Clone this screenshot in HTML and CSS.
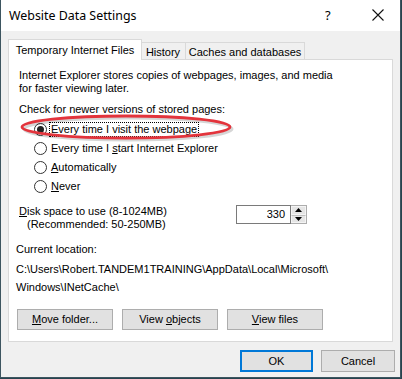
FILE: index.html
```html
<!DOCTYPE html>
<html>
<head>
<meta charset="utf-8">
<link rel="stylesheet" href="styles.css">
</head>
<body>
<div class="window">
  <div class="titlebar">
    <span class="title">Website Data Settings</span>
    <span class="help">?</span>
    <span class="close">
      <svg width="12" height="12" viewBox="0 0 12 12"><path d="M0.5 0.5 L11.5 11.5 M11.5 0.5 L0.5 11.5" stroke="#111" stroke-width="1.1" fill="none"/></svg>
    </span>
  </div>
  <div class="body">
    <div class="tabs">
      <div class="tab active">Temporary Internet Files</div>
      <div class="tab history">History</div>
      <div class="tab caches">Caches and databases</div>
    </div>
    <div class="panel">
      <p class="desc">Internet Explorer stores copies of webpages, images, and media<br>for faster viewing later.</p>
      <p class="check">Check for newer versions of stored pages:</p>
      <div class="radios">
        <div class="radio"><span class="rb on"></span><span class="lbl focus"><u>E</u>very time I visit the webpage</span></div>
        <div class="radio"><span class="rb"></span><span class="lbl">Every time I <u>s</u>tart Internet Explorer</span></div>
        <div class="radio"><span class="rb"></span><span class="lbl"><u>A</u>utomatically</span></div>
        <div class="radio"><span class="rb"></span><span class="lbl"><u>N</u>ever</span></div>
      </div>
      <div class="disk">
        <div class="disk-label"><u>D</u>isk space to use (8-1024MB)<br><span class="rec">(Recommended: 50-250MB)</span></div>
        <div class="spin">
          <div class="spin-field">330</div>
          <div class="spin-btns">
            <div class="spin-btn"><svg width="7" height="4" viewBox="0 0 7 4"><path d="M0 4 L3.5 0 L7 4 Z" fill="#000"/></svg></div>
            <div class="spin-btn"><svg width="7" height="4" viewBox="0 0 7 4"><path d="M0 0 L3.5 4 L7 0 Z" fill="#000"/></svg></div>
          </div>
        </div>
      </div>
      <div class="loc-label">Current location:</div>
      <div class="path p1">C:\Users\Robert.TANDEM1TRAINING\AppData\Local\Microsoft\</div>
      <div class="path p2">Windows\INetCache\</div>
      <div class="btnrow">
        <div class="btn"><span><u>M</u>ove folder...</span></div>
        <div class="btn"><span>View <u>o</u>bjects</span></div>
        <div class="btn"><span><u>V</u>iew files</span></div>
      </div>
    </div>
    <div class="footer">
      <div class="btn dlg ok"><span>OK</span></div>
      <div class="btn dlg"><span>Cancel</span></div>
    </div>
  </div>
  <svg class="mark" width="240" height="36" viewBox="0 0 240 36">
    <ellipse cx="110" cy="18" rx="104" ry="11" fill="none" stroke="rgba(0,0,0,0.16)" stroke-width="3"/>
    <ellipse cx="108" cy="16" rx="104" ry="11" fill="none" stroke="#e3343c" stroke-width="2.8"/>
  </svg>
</div>
</body>
</html>
```

FILE: styles.css
```css
* { box-sizing: border-box; }
html, body { margin: 0; padding: 0; }
body {
  background: #27444e;
  width: 402px;
  height: 379px;
  overflow: hidden;
  font-family: "Liberation Sans", Arial, sans-serif;
  font-size: 11px;
  color: #000;
}
p { margin: 0; }
u { text-decoration: underline; text-underline-offset: 1px; }

.window {
  position: relative;
  width: 401px;
  height: 378px;
  border-left: 1px solid #3d5560;
  border-right: 1px solid #3d5560;
  border-bottom: 1px solid #3d5560;
  background: #f0f0f0;
  display: flex;
  flex-direction: column;
}

.titlebar {
  height: 31px;
  background: #fff;
  display: flex;
  align-items: center;
  padding-left: 8px;
  font-family: "Noto Sans", "Open Sans", sans-serif;
  font-size: 12.4px;
  color: #000;
}
.title { flex: 1; padding-bottom: 1px; }
.help { width: 12px; margin-right: 35px; font-size: 13px; padding-bottom: 1px; }
.close { width: 12px; height: 12px; margin-right: 16px; display: flex; margin-bottom: 1px; }

.body {
  flex: 1;
  padding: 7px 0 0 7px;
  display: flex;
  flex-direction: column;
}

.tabs {
  display: flex;
  align-items: flex-end;
  height: 21px;
  position: relative;
  z-index: 2;
}
.tab {
  height: 17px;
  border: 1px solid #d9d9d9;
  border-bottom: none;
  background: #f0f0f0;
  display: flex;
  align-items: center;
  justify-content: center;
  padding-top: 1px;
}
.tab.active {
  width: 134px;
  height: 21px;
  background: #fff;
  margin-bottom: -1px;
  padding-top: 0;
  padding-bottom: 1px;
  position: relative;
  z-index: 3;
}
.tab.history { width: 45px; margin-left: -1px; border-left: none; }
.tab.caches { width: 120px; margin-left: -1px; }

.panel {
  width: 385px;
  height: 283px;
  background: #fff;
  border: 1px solid #d9d9d9;
  padding: 9px 10px 0 10px;
  display: flex;
  flex-direction: column;
}
.desc { line-height: 13px; }
.check { line-height: 13px; margin-top: 8px; }

.radios { margin-top: 4px; display: flex; flex-direction: column; }
.radio { height: 19px; display: flex; align-items: center; padding-left: 15px; }
.rb {
  width: 13px; height: 13px;
  border: 1px solid #333;
  border-radius: 50%;
  background: #fff;
  margin-right: 2px;
  display: flex; align-items: center; justify-content: center;
  flex: none;
}
.rb.on::after {
  content: "";
  width: 7px; height: 7px;
  border-radius: 50%;
  background: #222;
}
.lbl { padding: 0 1px; line-height: 13px; border: 1px solid transparent; }
.lbl.focus { border: 1px dotted #000; }

.disk { margin-top: 9px; display: flex; align-items: flex-start; }
.disk-label { width: 217px; line-height: 13px; }
.rec { padding-left: 8px; }
.spin { display: flex; height: 19px; }
.spin-field {
  width: 55px; height: 19px;
  border: 1px solid #7a7a7a;
  text-align: right;
  padding-right: 5px;
  line-height: 17px;
  background: #fff;
}
.spin-btns {
  width: 16px; height: 19px;
  border: 1px solid #adadad;
  border-left: none;
  display: flex; flex-direction: column;
  background: #e5e5e5;
}
.spin-btn {
  flex: 1;
  display: flex; align-items: center; justify-content: center;
  border: 1px solid #f4f4f4;
}
.spin-btn + .spin-btn { border-top: 1px solid #c0c0c0; }

.loc-label { margin-top: 11px; line-height: 14px; margin-left: -3px; }
.path { line-height: 14px; margin-left: -3px; }
.p1 { margin-top: 6px; }
.p2 { margin-top: 4px; }

.btnrow { margin-top: 15px; margin-left: -2px; display: flex; gap: 9px; }
.btn {
  width: 96px; height: 21px;
  background: #e1e1e1;
  border: 1px solid #adadad;
  display: flex; align-items: center; justify-content: center;
  padding-bottom: 1px;
}

.footer {
  margin-top: 8px;
  display: flex;
  justify-content: flex-end;
  gap: 8px;
  padding-right: 5px;
}
.btn.dlg { width: 74px; height: 22px; }
.btn.ok { width: 73px; border: 2px solid #0078d7; }

.mark {
  position: absolute;
  left: 17px;
  top: 111px;
  pointer-events: none;
}
```
